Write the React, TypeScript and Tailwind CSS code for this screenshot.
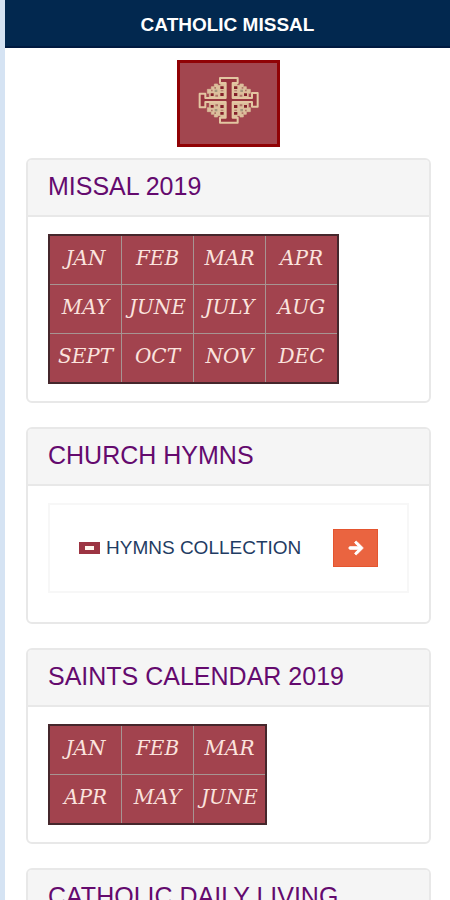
import type { ReactNode } from 'react';
import { FaArrowRight } from 'react-icons/fa';

const missalMonths = [
  ['JAN', 'FEB', 'MAR', 'APR'],
  ['MAY', 'JUNE', 'JULY', 'AUG'],
  ['SEPT', 'OCT', 'NOV', 'DEC'],
];

const saintsMonths = [
  ['JAN', 'FEB', 'MAR'],
  ['APR', 'MAY', 'JUNE'],
];

// x, y of each small cross, and the way it is mirrored
const smallCrosses = [
  [150, 121, 1, 1],
  [227, 121, -1, 1],
  [150, 180, 1, -1],
  [227, 180, -1, -1],
];

function JerusalemCross() {
  return (
    <svg viewBox="96 74 186 147" className="w-[62px] h-[49px]" fill="none" aria-hidden="true">
      {smallCrosses.map(([x, y, sx, sy]) => (
        <g key={`${x}-${y}`} transform={`translate(${x} ${y}) scale(${sx} ${sy})`}>
          <path
            d="M-26 -4H-14V-12H-5V-20H5V-16H14V-22H28V22H-20V8H-26Z"
            fill="#dcbf9c"
            stroke="#dcbf9c"
            strokeWidth="2"
            strokeLinejoin="round"
          />
          <path d="M13 -13h10v8h-10zM13 7h10v9h-10zM-16 8h9v8h-9z" fill="#84202a" />
          <path d="M-5 -11h5v5h-5zM-15 -3h5v5h-5zM-2 12h8v6h-8zM14 -1h8v3h-8z" fill="#b07468" />
          <path d="M-4 -3h8v7h-8z" fill="#a3957c" />
        </g>
      ))}
      <path
        d="M162 83H215V98H200V143H258V128H275V169H258V155H200V202H215V217H162V202H179V155H118V171H101V130H118V143H179V98H162Z"
        fill="#98353f"
        stroke="#e3c6a2"
        strokeWidth="6"
        strokeLinejoin="round"
      />
    </svg>
  );
}

function Panel({ title, children }: { title: string; children?: ReactNode }) {
  return (
    <section className="border-2 border-[#e8e8e8] rounded-md overflow-hidden bg-white">
      <h2 className="h-[57px] px-5 pt-[10px] text-[25px] leading-8 bg-[#f5f5f5] border-b-2 border-[#e8e8e8] text-[#640a6e]">
        {title}
      </h2>
      {children}
    </section>
  );
}

function MonthTable({ label, rows }: { label: string; rows: string[][] }) {
  return (
    <table
      aria-label={label}
      className="border-collapse border-2 border-[#45272c] bg-[#a2434e] text-[#fbe3de] text-xl italic font-['DejaVu_Serif',serif]"
    >
      <tbody>
        {rows.map((row) => (
          <tr key={row[0]}>
            {row.map((month) => (
              <td key={month} className="border border-[#a79492] p-0">
                <a href="#" className="flex items-center justify-center w-[71px] h-12 pb-1">
                  {month}
                </a>
              </td>
            ))}
          </tr>
        ))}
      </tbody>
    </table>
  );
}

export default function App() {
  return (
    <div className="min-h-screen border-l-[5px] border-[#d5e3f3] bg-white font-['Liberation_Sans',Arial,sans-serif]">
      <header className="h-12 flex items-center justify-center pt-1 bg-[#02284f] border-b-2 border-[#001a40]">
        <h1 className="text-[19px] font-bold text-white">CATHOLIC MISSAL</h1>
      </header>

      <main className="pl-[21px] pr-[19px] pt-3">
        <a
          href="#"
          aria-label="Home"
          className="flex items-start justify-center w-[103px] h-[87px] mx-auto pt-3 border-[3px] border-[#900205] bg-[#a2464f]"
        >
          <JerusalemCross />
        </a>

        <div className="flex flex-col gap-6 mt-[11px]">
          <Panel title="MISSAL 2019">
            <div className="px-5 py-[17px]">
              <MonthTable label="Missal 2019" rows={missalMonths} />
            </div>
          </Panel>

          <Panel title="CHURCH HYMNS">
            <div className="px-5 pt-[17px] pb-[29px]">
              <div className="flex items-center justify-between h-[90px] px-[29px] border-2 border-[#f7f7f7]">
                <a href="#" className="flex items-center gap-[6px] text-[19px] text-[#1f3c63]">
                  <span className="w-[21px] h-3 flex items-center justify-center bg-[#9c3442]">
                    <span className="w-[9px] h-1 bg-[#fff5ee]" />
                  </span>
                  HYMNS COLLECTION
                </a>
                <button
                  type="button"
                  aria-label="Open hymns collection"
                  className="w-[45px] h-[38px] flex items-center justify-center bg-[#ea6440] border border-[#e4552f] text-white"
                >
                  <FaArrowRight className="w-4 h-4 overflow-visible" stroke="currentColor" strokeWidth="32" />
                </button>
              </div>
            </div>
          </Panel>

          <Panel title="SAINTS CALENDAR 2019">
            <div className="px-5 py-[17px]">
              <MonthTable label="Saints calendar 2019" rows={saintsMonths} />
            </div>
          </Panel>

          <Panel title="CATHOLIC DAILY LIVING" />
        </div>
      </main>
    </div>
  );
}
